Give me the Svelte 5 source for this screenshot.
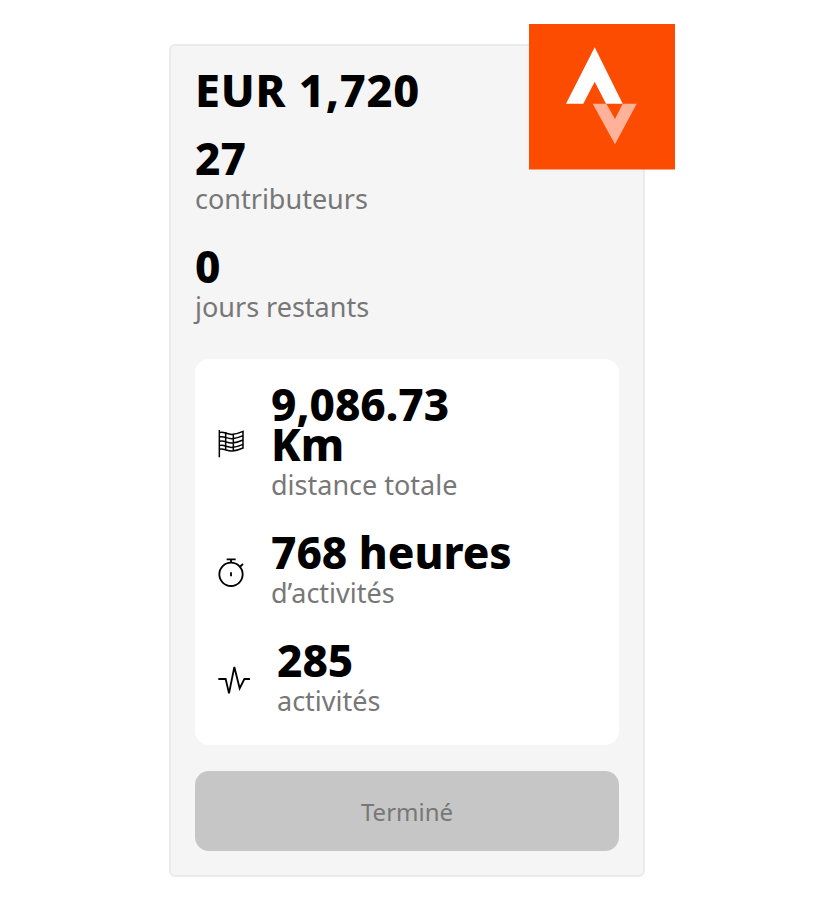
<script>
  const stats = [
    { value: '27', label: 'contributeurs' },
    { value: '0', label: 'jours restants' }
  ];
</script>

<main class="page">
  <section class="card">
    <svg class="logo" viewBox="0 0 146 145.500" aria-label="Strava">
      <rect width="146" height="145.500" fill="#fc4c02" />
      <path d="M63.700 79.700 86 120.300l21.700-40.600H93.700L86 95 77.300 79.700z" fill="#ffb299" />
      <path d="M65.700 23.300 37 79.700h17.300L65.700 57.700 77 79.700h16.700z" fill="#fff" />
    </svg>

    <h1>EUR 1,720</h1>
    {#each stats as s}
      <div class="stat">
        <strong>{s.value}</strong>
        <span>{s.label}</span>
      </div>
    {/each}

    <div class="panel">
      <div class="row">
        <svg class="icon" viewBox="36 27 84 90">
          <path d="M43 30v82M43 38c14-5 24 7 40 5 12-1 22-5 31-9v50c-9 4-19 8-31 9-16 2-26-9-40-5M43 51c14-5 24 7 40 5 12-1 22-5 31-9M43 64c14-5 24 7 40 5 12-1 22-5 31-9M43 77c14-5 24 7 40 5 12-1 22-5 31-9M62 36v52M85 43v50" fill="none" stroke="#000" stroke-width="4.500" />
        </svg>
        <div class="text">
          <strong>9,086.73 Km</strong>
          <span>distance totale</span>
        </div>
      </div>
      <div class="row">
        <svg class="icon" viewBox="36 36 84 90">
          <circle cx="78" cy="88" r="35" fill="none" stroke="#000" stroke-width="5.500" />
          <path d="M65 43h27M78 43v9M78 82v12M104 66l10-9" fill="none" stroke="#000" stroke-width="5.500" />
        </svg>
        <div class="text">
          <strong>768 heures</strong>
          <span>d’activités</span>
        </div>
      </div>
      <div class="row">
        <svg class="icon pulse" viewBox="36 30 102 90">
          <path d="M40 72h22l10 43 16-79 16 64 14-28h17" fill="none" stroke="#000" stroke-width="5.500" />
        </svg>
        <div class="text">
          <strong>285</strong>
          <span>activités</span>
        </div>
      </div>
    </div>

    <button class="done" disabled>Terminé</button>
  </section>
</main>

<style>
  :global(body) {
    background: #fff;
  }

  .page {
    display: flex;
    justify-content: center;
    padding: 44px 0;
    font-family: "Noto Sans", sans-serif;
  }

  .card {
    position: relative;
    box-sizing: border-box;
    width: 476px;
    height: 833px;
    padding: 17px 24px 24px;
    background: #f5f5f5;
    border: 2px solid #ebebeb;
    border-radius: 6px;
  }

  .logo {
    position: absolute;
    top: -22px;
    right: -32px;
    width: 146px;
    height: 145.5px;
  }

  h1 {
    margin: 0;
    font-size: 45px;
    line-height: 54px;
    font-weight: 800;
    letter-spacing: 0.8px;
    color: #000;
  }

  strong {
    display: block;
    font-size: 44px;
    line-height: 40px;
    font-weight: 800;
    color: #000;
  }

  span {
    display: block;
    padding-top: 1px;
    margin-bottom: -1px;
    font-size: 27px;
    line-height: 40px;
    color: #777;
  }

  .stat {
    margin-top: 21px;
  }

  .stat + .stat {
    margin-top: 28px;
  }

  .panel {
    display: flex;
    flex-direction: column;
    gap: 28px;
    margin-top: 33px;
    padding: 25px 24px 25px 22px;
    background: #fff;
    border-radius: 14px;
  }

  .row {
    display: flex;
    align-items: center;
    gap: 26px;
  }

  .text {
    max-width: 250px;
  }

  .icon {
    flex: none;
    width: 28px;
    height: 30px;
  }

  .icon.pulse {
    width: 34px;
  }

  .done {
    display: block;
    width: 100%;
    height: 80px;
    margin-top: 26px;
    border: 0;
    border-radius: 14px;
    background: #c6c6c6;
    font-family: inherit;
    font-size: 24px;
    color: #777;
  }
</style>
